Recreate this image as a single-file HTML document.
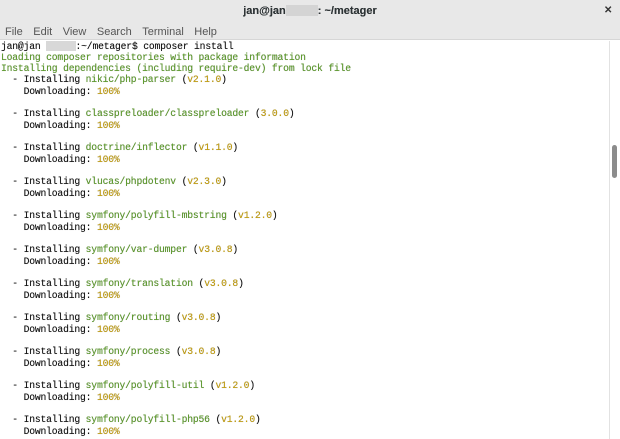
<!DOCTYPE html>
<html><head><meta charset="utf-8"><style>
*{margin:0;padding:0;box-sizing:border-box}
body{width:620px;height:439px;overflow:hidden;background:#fff;position:relative;font-family:"Liberation Sans",sans-serif}
#hdr{position:absolute;left:0;top:0;width:620px;height:40px;background:#e8e8e8;border-bottom:1px solid #d6d6d6}
#title{position:absolute;top:5px;left:0;width:620px;text-align:center;font-size:11px;color:#2e3436;font-weight:600;text-shadow:0 0 0.2px #2e3436}
.blur{display:inline-block;width:32px;height:11px;background:#d4d4d4;vertical-align:-2px}
#close{position:absolute;left:604px;top:5px;font-size:10px;color:#333;font-weight:bold}
#menu{position:absolute;top:26px;left:5px;font-size:11px;color:#555}
#menu span{margin-right:10.5px}
#term{position:absolute;left:1px;top:40.5px;font-family:"Liberation Mono",monospace;font-size:9.7px;letter-spacing:-0.17px;line-height:11.33px;color:#111;white-space:pre;text-shadow:0 0 0.4px rgba(0,0,0,0.6)}
.g{color:#5c9e28}.y{color:#c9a20a}
.b2{display:inline-block;width:30px;height:10px;background:#d8d8d8;vertical-align:-2px;margin-left:5px;text-shadow:none}
#sbline{position:absolute;left:609px;top:41px;width:1px;height:398px;background:#e2e2e2}
#sb{position:absolute;left:612px;top:145px;width:5px;height:33px;background:#8c8c8c;border-radius:3px}
</style></head><body>
<div id="hdr">
<div id="title">jan@jan<span class="blur"></span>: ~/metager</div>
<div id="close">✕</div>
<div id="menu"><span>File</span><span>Edit</span><span>View</span><span>Search</span><span>Terminal</span><span>Help</span></div>
</div>
<div id="term">jan@jan<span class="b2"></span>:~/metager$ composer install
<span class="g">Loading composer repositories with package information</span>
<span class="g">Installing dependencies (including require-dev) from lock file</span>
  - Installing <span class="g">nikic/php-parser</span> (<span class="y">v2.1.0</span>)
    Downloading: <span class="y">100%</span>

  - Installing <span class="g">classpreloader/classpreloader</span> (<span class="y">3.0.0</span>)
    Downloading: <span class="y">100%</span>

  - Installing <span class="g">doctrine/inflector</span> (<span class="y">v1.1.0</span>)
    Downloading: <span class="y">100%</span>

  - Installing <span class="g">vlucas/phpdotenv</span> (<span class="y">v2.3.0</span>)
    Downloading: <span class="y">100%</span>

  - Installing <span class="g">symfony/polyfill-mbstring</span> (<span class="y">v1.2.0</span>)
    Downloading: <span class="y">100%</span>

  - Installing <span class="g">symfony/var-dumper</span> (<span class="y">v3.0.8</span>)
    Downloading: <span class="y">100%</span>

  - Installing <span class="g">symfony/translation</span> (<span class="y">v3.0.8</span>)
    Downloading: <span class="y">100%</span>

  - Installing <span class="g">symfony/routing</span> (<span class="y">v3.0.8</span>)
    Downloading: <span class="y">100%</span>

  - Installing <span class="g">symfony/process</span> (<span class="y">v3.0.8</span>)
    Downloading: <span class="y">100%</span>

  - Installing <span class="g">symfony/polyfill-util</span> (<span class="y">v1.2.0</span>)
    Downloading: <span class="y">100%</span>

  - Installing <span class="g">symfony/polyfill-php56</span> (<span class="y">v1.2.0</span>)
    Downloading: <span class="y">100%</span></div>
<div id="sbline"></div>
<div id="sb"></div>
</body></html>
